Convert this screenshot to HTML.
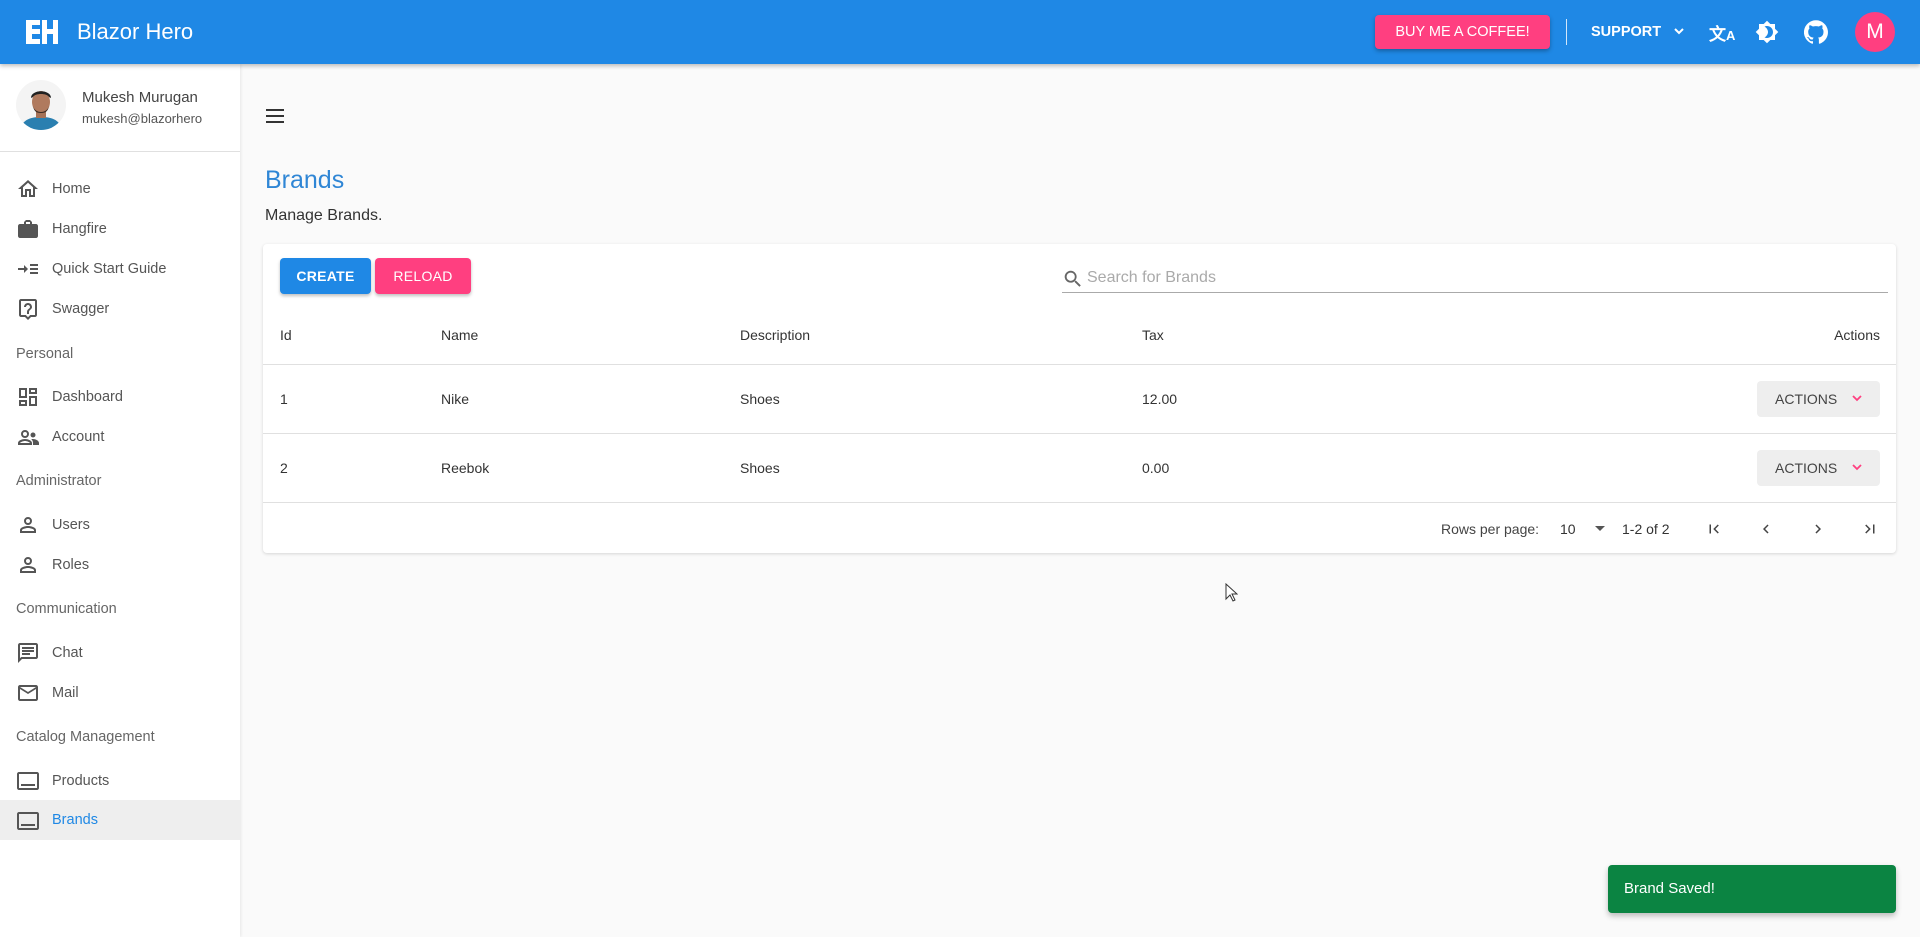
<!DOCTYPE html>
<html><head><meta charset="utf-8"><style>
*{box-sizing:border-box;margin:0;padding:0}
body{width:1920px;height:937px;overflow:hidden;background:#fafafa;font-family:"Liberation Sans",sans-serif;color:#424242;position:relative}
.abs{position:absolute}
.bar{left:0;top:0;width:1920px;height:64px;background:#1f88e5;box-shadow:0 2px 4px rgba(0,0,0,.25);z-index:3}
.side{left:0;top:64px;width:240px;height:873px;background:#fff;box-shadow:1px 0 3px rgba(0,0,0,.08);z-index:2}
.nav{position:absolute;left:0;width:240px;height:40px;display:flex;align-items:center;font-size:14.5px;color:#555}
.nav svg{position:absolute;left:16px;top:8px;width:24px;height:24px;fill:#555}
.nav span{position:absolute;left:52px}
.grp{position:absolute;left:16px;font-size:14.5px;color:#666}
.card{left:263px;top:244px;width:1633px;height:309px;background:#fff;box-shadow:0 1px 3px rgba(0,0,0,.15);border-radius:4px}
.btn{position:absolute;height:36px;border-radius:4px;color:#fff;font-size:14px;font-weight:bold;letter-spacing:.3px;display:flex;align-items:center;justify-content:center;box-shadow:0 2px 3px rgba(0,0,0,.25)}
.t{position:absolute;font-size:14px;color:#333}
.line{position:absolute;left:0;width:1633px;height:1px;background:#e0e0e0}
.act{position:absolute;left:1494px;width:123px;height:36px;background:#eee;border-radius:4px;font-size:14px;color:#444;display:flex;align-items:center;padding-left:18px}
.act svg{position:absolute;right:18px;top:13px}
</style></head><body>
<div class="abs bar">
 <svg class="abs" style="left:26px;top:20px" width="32" height="24" viewBox="0 0 32 24"><path fill="#fff" d="M0 0h14v5H6v4h8v5H6v5h8v5H0zM16 0h5v9h6V0h5v24h-5v-10h-6v10h-5z"/><path fill="#1f88e5" d="M14 9h2v5h-2z"/></svg>
 <div class="abs" style="left:77px;top:19px;font-size:22px;color:#fff">Blazor Hero</div>
 <div class="abs" style="left:1375px;top:15px;width:175px;height:34px;background:#ff3f80;border-radius:4px;box-shadow:0 2px 4px rgba(0,0,0,.3);color:#fff;font-size:14.5px;display:flex;align-items:center;justify-content:center">BUY ME A COFFEE!</div>
 <div class="abs" style="left:1566px;top:19px;width:1px;height:26px;background:#fff;opacity:.8"></div>
 <div class="abs" style="left:1591px;top:24px;color:#fff;font-size:14.5px;font-weight:bold">SUPPORT</div>
 <svg class="abs" style="left:1673px;top:26px" width="12" height="10" viewBox="0 0 12 10"><path d="M2 3l4 4 4-4" stroke="#fff" stroke-width="2" fill="none"/></svg>
 <div class="abs" style="left:1709px;top:20px;color:#fff;font-size:17px;font-weight:bold">文<span style="font-size:13px">A</span></div>
 <svg class="abs" style="left:1755px;top:20px" width="24" height="24" viewBox="0 0 24 24"><path fill="#fff" d="M20 8.7V4h-4.7L12 .7 8.7 4H4v4.7L.7 12 4 15.3V20h4.7l3.3 3.3 3.3-3.3H20v-4.7l3.3-3.3L20 8.7zM12 18c-.9 0-1.8-.2-2.5-.6 2-1 3.5-3.1 3.5-5.4s-1.5-4.4-3.5-5.4C10.2 6.2 11.1 6 12 6c3.3 0 6 2.7 6 6s-2.7 6-6 6z"/></svg>
 <svg class="abs" style="left:1804px;top:20px" width="24" height="24" viewBox="0 0 24 24"><path fill="#fff" d="M12 .3a12 12 0 0 0-3.8 23.4c.6.1.8-.3.8-.6v-2c-3.3.7-4-1.6-4-1.600-.6-1.4-1.4-1.8-1.4-1.8-1-.7.1-.7.1-.7 1.2.1 1.8 1.2 1.8 1.2 1 1.8 2.8 1.3 3.5 1 0-.8.4-1.3.7-1.6-2.7-.3-5.5-1.3-5.5-6 0-1.2.5-2.300 1.3-3.1-.2-.4-.6-1.6 0-3.2 0 0 1-.3 3.4 1.2a11.5 11.5 0 0 1 6 0c2.3-1.5 3.3-1.2 3.3-1.2.6 1.6.2 2.8 0 3.2.9.8 1.3 1.9 1.3 3.2 0 4.6-2.8 5.6-5.5 5.9.5.4.9 1 .9 2.2v3.3c0 .3.1.7.8.6A12 12 0 0 0 12 .3"/></svg>
 <div class="abs" style="left:1855px;top:12px;width:40px;height:40px;border-radius:50%;background:#ff3f80;color:#fff;font-size:21px;display:flex;align-items:center;justify-content:center">M</div>
</div>
<div class="abs side">
 <svg class="abs" style="left:16px;top:16px" width="50" height="50" viewBox="0 0 50 50"><defs><clipPath id="c"><circle cx="25" cy="25" r="25"/></clipPath></defs><g clip-path="url(#c)"><rect width="50" height="50" fill="#f4f4f4"/><path d="M4 50c2-10 10-13 21-13s19 3 21 13z" fill="#2a7fb0"/><rect x="20" y="28" width="10" height="10" fill="#a57258"/><ellipse cx="25" cy="22" rx="9" ry="11" fill="#b07a5e"/><path d="M15 18c0-9 20-9 20 0l-2-1c-2-4-14-4-16 0z" fill="#222"/><path d="M17 26c2 8 14 8 16 0-1 5-3 7-8 7s-7-2-8-7z" fill="#3a2a22"/></g></svg>
 <div class="abs" style="left:82px;top:25px;font-size:15px;color:#444">Mukesh Murugan</div>
 <div class="abs" style="left:82px;top:47px;font-size:13px;color:#555">mukesh@blazorhero</div>
 <div class="abs" style="left:0;top:87px;width:240px;height:1px;background:#e0e0e0"></div>
 <div class="nav" style="top:105px"><svg viewBox="0 0 24 24"><path d="M12 3L2 12h3v8h6v-6h2v6h6v-8h3L12 3zm5 15h-2v-6H9v6H7v-7.8l5-4.5 5 4.5V18z"/></svg><span>Home</span></div>
 <div class="nav" style="top:145px"><svg viewBox="0 0 24 24"><path d="M20 7h-4V5l-2-2h-4L8 5v2H4c-1.1 0-2 .9-2 2v10c0 1.1.9 2 2 2h16c1.1 0 2-.9 2-2V9c0-1.1-.9-2-2-2zM10 5h4v2h-4V5z"/></svg><span>Hangfire</span></div>
 <div class="nav" style="top:185px"><svg viewBox="0 0 24 24"><path d="M2 11h6V8l4 4-4 4v-3H2zM14 7h8v2h-8zm0 4h8v2h-8zm0 4h8v2h-8z"/></svg><span>Quick Start Guide</span></div>
 <div class="nav" style="top:225px"><svg viewBox="0 0 24 24"><path d="M19 2H5c-1.1 0-2 .9-2 2v14c0 1.1.9 2 2 2h4l3 3 3-3h4c1.1 0 2-.9 2-2V4c0-1.1-.9-2-2-2zm0 16h-4.8L12 20.2 9.8 18H5V4h14v14zm-8-3h2v2h-2zm1-9c-2.2 0-4 1.8-4 4h2c0-1.1.9-2 2-2s2 .9 2 2c0 2-3 1.8-3 5h2c0-2.2 3-2.5 3-5 0-2.2-1.8-4-4-4z"/></svg><span>Swagger</span></div>
 <div class="grp" style="top:282px">Personal</div>
 <div class="nav" style="top:313px"><svg viewBox="0 0 24 24"><path d="M19 5v2h-4V5h4M9 5v6H5V5h4m10 8v6h-4v-6h4M9 17v2H5v-2h4M21 3h-8v6h8V3zM11 3H3v10h8V3zm10 8h-8v10h8V11zm-10 4H3v6h8v-6z"/></svg><span>Dashboard</span></div>
 <div class="nav" style="top:353px"><svg viewBox="0 0 24 24"><circle cx="9" cy="9" r="3" fill="none" stroke="#555" stroke-width="2"/><path d="M9 14c-3 0-7 1.5-7 4v2h14v-2c0-2.5-4-4-7-4zm-5 4c.3-.8 3-2 5-2s4.7 1.2 5 2z"/><circle cx="17" cy="10" r="2.5"/><path d="M17 14c-.6 0-1.2 0-1.8.1 1.1.9 1.8 2.1 1.8 3.9v2h6v-2c0-2.4-3.6-4-6-4z"/></svg><span>Account</span></div>
 <div class="grp" style="top:409px">Administrator</div>
 <div class="nav" style="top:441px"><svg viewBox="0 0 24 24"><path d="M12 6a2 2 0 1 1 0 4 2 2 0 0 1 0-4m0 9c2.7 0 5.8 1.3 6 2v1H6v-1c.2-.7 3.3-2 6-2m0-11a4 4 0 1 0 0 8 4 4 0 0 0 0-8zm0 9c-2.7 0-8 1.3-8 4v3h16v-3c0-2.7-5.3-4-8-4z"/></svg><span>Users</span></div>
 <div class="nav" style="top:481px"><svg viewBox="0 0 24 24"><path d="M12 6a2 2 0 1 1 0 4 2 2 0 0 1 0-4m0 9c2.7 0 5.8 1.3 6 2v1H6v-1c.2-.7 3.3-2 6-2m0-11a4 4 0 1 0 0 8 4 4 0 0 0 0-8zm0 9c-2.7 0-8 1.3-8 4v3h16v-3c0-2.7-5.3-4-8-4z"/></svg><span>Roles</span></div>
 <div class="grp" style="top:537px">Communication</div>
 <div class="nav" style="top:569px"><svg viewBox="0 0 24 24"><path d="M20 2H4c-1.1 0-2 .9-2 2v18l4-4h14c1.1 0 2-.9 2-2V4c0-1.1-.9-2-2-2zm0 14H5.2L4 17.2V4h16v12zM6 12h8v2H6zm0-3h12v2H6zm0-3h12v2H6z"/></svg><span>Chat</span></div>
 <div class="nav" style="top:609px"><svg viewBox="0 0 24 24"><path d="M22 6c0-1.1-.9-2-2-2H4c-1.1 0-2 .9-2 2v12c0 1.1.9 2 2 2h16c1.1 0 2-.9 2-2V6zm-2 0l-8 5-8-5h16zm0 12H4V8l8 5 8-5v10z"/></svg><span>Mail</span></div>
 <div class="grp" style="top:665px">Catalog Management</div>
 <div class="nav" style="top:697px"><svg viewBox="0 0 24 24"><path d="M21 3H3c-1.1 0-2 .9-2 2v14c0 1.1.9 2 2 2h18c1.1 0 2-.9 2-2V5c0-1.1-.9-2-2-2zm0 16H3V5h18v14zM5 15h14v2H5z"/></svg><span>Products</span></div>
 <div class="nav" style="top:736px;background:#eee"><svg style="top:9px" viewBox="0 0 24 24"><path d="M21 3H3c-1.1 0-2 .9-2 2v14c0 1.1.9 2 2 2h18c1.1 0 2-.9 2-2V5c0-1.1-.9-2-2-2zm0 16H3V5h18v14zM5 15h14v2H5z"/></svg><span style="color:#1f88e5;top:12px">Brands</span></div>
</div>
<svg class="abs" style="left:266px;top:109px" width="18" height="14" viewBox="0 0 18 14"><path d="M0 1h18M0 7h18M0 13h18" stroke="#333" stroke-width="2"/></svg>
<div class="abs" style="left:265px;top:166px;font-size:25px;color:#2f86d5">Brands</div>
<div class="abs" style="left:265px;top:207px;font-size:16px;color:#333">Manage Brands.</div>
<div class="abs card">
 <div class="btn" style="left:17px;top:14px;width:91px;background:#1f88e5">CREATE</div>
 <div class="btn" style="left:112px;top:14px;width:96px;background:#ff3f80;font-weight:normal">RELOAD</div>
 <svg class="abs" style="left:799px;top:24px" width="22" height="22" viewBox="0 0 24 24"><path fill="#666" d="M15.5 14h-.8l-.3-.3A6.5 6.5 0 1 0 9.5 16c1.6 0 3.1-.6 4.2-1.6l.3.3v.8l5 5 1.5-1.5-5-5zm-6 0A4.5 4.5 0 1 1 14 9.5 4.5 4.5 0 0 1 9.5 14z"/></svg>
 <div class="abs" style="left:824px;top:25px;font-size:16px;color:#aaa">Search for Brands</div>
 <div class="abs" style="left:799px;top:48px;width:826px;height:1px;background:#aaa"></div>
 <div class="t" style="left:17px;top:83px">Id</div>
 <div class="t" style="left:178px;top:83px">Name</div>
 <div class="t" style="left:477px;top:83px">Description</div>
 <div class="t" style="left:879px;top:83px">Tax</div>
 <div class="t" style="right:16px;top:83px">Actions</div>
 <div class="line" style="top:120px"></div>
 <div class="t" style="left:17px;top:147px">1</div><div class="t" style="left:178px;top:147px">Nike</div><div class="t" style="left:477px;top:147px">Shoes</div><div class="t" style="left:879px;top:147px">12.00</div>
 <div class="act" style="top:137px">ACTIONS<svg width="10" height="8" viewBox="0 0 10 8"><path d="M1 2l4 4 4-4" stroke="#ff3f80" stroke-width="1.8" fill="none"/></svg></div>
 <div class="line" style="top:189px"></div>
 <div class="t" style="left:17px;top:216px">2</div><div class="t" style="left:178px;top:216px">Reebok</div><div class="t" style="left:477px;top:216px">Shoes</div><div class="t" style="left:879px;top:216px">0.00</div>
 <div class="act" style="top:206px">ACTIONS<svg width="10" height="8" viewBox="0 0 10 8"><path d="M1 2l4 4 4-4" stroke="#ff3f80" stroke-width="1.8" fill="none"/></svg></div>
 <div class="line" style="top:258px"></div>
 <div class="t" style="left:1178px;top:277px;color:#444">Rows per page:</div>
 <div class="t" style="left:1297px;top:277px">10</div>
 <svg class="abs" style="left:1332px;top:282px" width="10" height="6"><path d="M0 0h10L5 5z" fill="#555"/></svg>
 <div class="t" style="left:1359px;top:277px">1-2 of 2</div>
 <svg class="abs" style="left:1442px;top:276px" width="18" height="18" viewBox="0 0 24 24"><path fill="#444" d="M18.4 16.6L13.8 12l4.6-4.6L17 6l-6 6 6 6zM6 6h2v12H6z"/></svg>
 <svg class="abs" style="left:1494px;top:276px" width="18" height="18" viewBox="0 0 24 24"><path fill="#444" d="M15.4 7.4L14 6l-6 6 6 6 1.4-1.4L10.8 12z"/></svg>
 <svg class="abs" style="left:1546px;top:276px" width="18" height="18" viewBox="0 0 24 24"><path fill="#444" d="M10 6L8.6 7.4 13.2 12l-4.6 4.6L10 18l6-6z"/></svg>
 <svg class="abs" style="left:1598px;top:276px" width="18" height="18" viewBox="0 0 24 24"><path fill="#444" d="M5.6 7.4L10.2 12l-4.6 4.6L7 18l6-6-6-6zM16 6h2v12h-2z"/></svg>
</div>
<svg class="abs" style="left:1225px;top:583px" width="13" height="20" viewBox="0 0 13 20"><path d="M1 1v15l4-4 3 6 2-1-3-6h5z" fill="#fff" stroke="#333" stroke-width="1"/></svg>
<div class="abs" style="left:1608px;top:865px;width:288px;height:48px;background:#0b8442;border-radius:4px;box-shadow:0 3px 6px rgba(0,0,0,.25);color:#fff;font-size:15px;padding:15px 0 0 16px">Brand Saved!</div>
</body></html>
